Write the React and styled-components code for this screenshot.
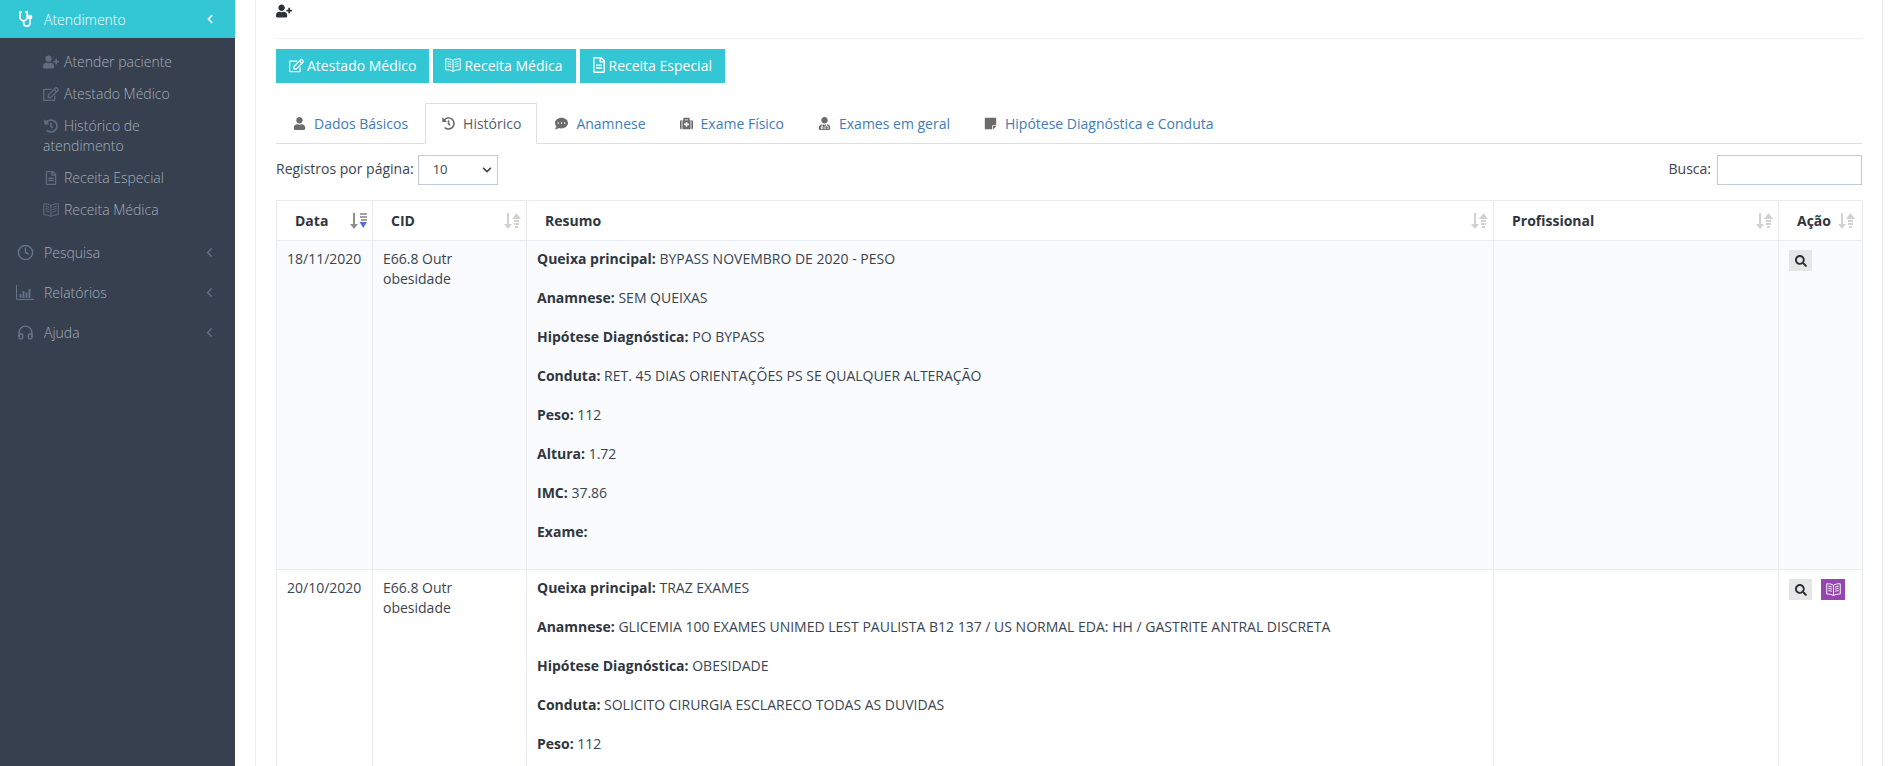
import React from 'react';
import styled, { createGlobalStyle } from 'styled-components';
import {
  FaUserPlus, FaRegEdit, FaHistory, FaRegFileAlt, FaUser, FaCommentDots,
  FaMedkit, FaUserMd, FaStickyNote, FaSearch, FaChevronDown, FaChevronLeft,
} from 'react-icons/fa';
import { FiClock, FiHeadphones, FiChevronLeft } from 'react-icons/fi';

const GlobalStyle = createGlobalStyle`
  html, body { margin: 0; padding: 0; height: 766px; overflow: hidden; background: #fff; }
  body { font-family: "Open Sans", "Liberation Sans", sans-serif; font-size: 14px; line-height: 1.5; color: #3b4450; }
  * { box-sizing: border-box; }
`;

const Page = styled.div`
  display: flex;
  height: 766px;
  overflow: hidden;
`;

const Sidebar = styled.aside`
  width: 235px;
  flex: none;
  background: #36404e;
  color: #a3aebd;
`;

const NavHead = styled.div`
  display: flex;
  align-items: center;
  gap: 10px;
  height: ${p => p.$active ? 38 : 40}px;
  padding: 0 20px 0 16px;
  background: ${p => p.$active ? '#33c6d4' : 'transparent'};
  color: ${p => p.$active ? '#fff' : '#a3aebd'};
  font-size: 14px;
  font-weight: 300;
`;

const NavIcon = styled.span`
  width: 18px;
  flex: none;
  display: flex;
  justify-content: center;
  font-size: 17px;
  color: ${p => p.$active ? '#fff' : '#66748a'};
`;

const NavLabel = styled.span`
  flex: 1;
`;

const ActiveChevron = styled(FaChevronLeft)`
  font-size: 10px;
  color: #fff;
`;

const IdleChevron = styled(FiChevronLeft)`
  font-size: 15px;
  margin-right: -2px;
  color: #66748a;
`;

const SubList = styled.ul`
  list-style: none;
  margin: 0;
  padding: 8px 0 6.5px 43px;
`;

const SubItem = styled.li`
  padding: 6px 20px 6.5px 0;
  line-height: 19.5px;
  font-size: 14px;
  font-weight: 300;
  color: #a3aebd;
  svg { color: #5f6d80; margin-right: 5px; vertical-align: -2px; width: 16px; height: 14px; }
`;

const StethoscopeIcon = () => (
  <svg width="15" height="17" viewBox="0 0 15 17" fill="none" stroke="currentColor" strokeWidth="1.7">
    <path d="M4 1.2H2v5a3.6 3.6 0 0 0 7.2 0v-5h-2" />
    <path d="M5.6 10v2a3.2 3.2 0 0 0 6.4 0V8" />
    <circle cx="12" cy="6" r="1.5" fill="currentColor" />
  </svg>
);

const ChartIcon = () => (
  <svg width="18" height="15" viewBox="0 0 18 15" fill="none" stroke="currentColor" strokeWidth="1">
    <path d="M.5 0v14.5h17.5" />
    <path d="M4.5 13V9M7.5 13V6M10.5 13V7.5M13.5 13V4" strokeWidth="1.8" />
  </svg>
);

// livro aberto com linhas, o mesmo do menu e dos botoes
const BookIcon = ({ size = 16 }) => (
  <svg width={size} height={size * 0.875} viewBox="0 0 16 14" fill="none" stroke="currentColor" strokeWidth="1">
    <path d="M8 2.500C6 1 3.500.8.8.8v11c2.700 0 5.200.3 7.200 1.700 2-1.400 4.500-1.700 7.200-1.700V.8C12.500.8 10 1 8 2.500zM8 2.500v11" />
    <path d="M2.500 3.500c1.300 0 2.500.2 3.800.8M2.500 5.800c1.300 0 2.500.2 3.800.8M2.500 8.100c1.300 0 2.500.2 3.800.8M13.500 3.500c-1.300 0-2.500.2-3.800.8M13.500 5.800c-1.300 0-2.500.2-3.800.8M13.500 8.100c-1.300 0-2.500.2-3.800.8" />
  </svg>
);

const Content = styled.main`
  flex: 1;
  min-width: 0;
  padding-left: 20px;
  padding-right: 5px;
  display: flex;
`;

const Panel = styled.div`
  flex: 1;
  min-width: 0;
  border-left: 1px solid #eceff3;
  border-right: 1px solid #e6e8ec;
  padding: 0 20px;
`;

const TopIcon = styled.div`
  height: 39px;
  padding-top: 3px;
  border-bottom: 1px solid #eff1f6;
  color: #2c323a;
  font-size: 16px;
  line-height: 16px;
`;

const ButtonRow = styled.div`
  display: flex;
  gap: 4px;
  margin-top: 10px;
`;

const ActionButton = styled.button`
  display: flex;
  align-items: center;
  gap: ${p => p.$gap || 3}px;
  height: 34px;
  padding: 0 13px 2px ${p => p.$pl || 13}px;
  border: 0;
  background: #33c6d4;
  color: #fff;
  font: 14px "Open Sans", sans-serif;
  svg { font-size: 15px; }
`;

const FileIcon = styled(FaRegFileAlt)`
  width: 12px;
  height: 16px;
`;

const Tabs = styled.ul`
  display: flex;
  list-style: none;
  margin: 20px 0 0;
  padding: 0;
  height: 41px;
  border-bottom: 1px solid #dcdfe4;
`;

const Tab = styled.li`
  display: flex;
  align-items: center;
  gap: 8px;
  height: 41px;
  padding: 0 15px 0 17px;
  font-size: 14px;
  color: ${p => p.$active ? '#56606c' : '#427cb9'};
  background: ${p => p.$active ? '#fff' : 'transparent'};
  border: 1px solid ${p => p.$active ? '#dcdfe4' : 'transparent'};
  border-bottom-color: ${p => p.$active ? '#fff' : 'transparent'};
  svg { color: #6b6b6b; font-size: 13px; }
  &:first-child { padding: 0 16px; }
  &:nth-child(2) { padding-left: 16px; }
`;

const Controls = styled.div`
  display: flex;
  align-items: center;
  justify-content: space-between;
  margin-top: 11px;
  height: 30px;
  font-size: 14px;
`;

const ControlLabel = styled.label`
  display: flex;
  align-items: center;
  gap: 4px;
`;

const LabelText = styled.span`
  padding-bottom: 3px;
`;

const SelectBox = styled.div`
  display: flex;
  align-items: center;
  justify-content: space-between;
  width: 80px;
  height: 30px;
  padding: 0 2px 0 14px;
  border: 1px solid #c2cad8;
  font-size: 13px;
  background: #fff;
  svg { font-size: 10px; margin-right: 3px; color: #444; }
`;

const SearchInput = styled.input`
  width: 145px;
  height: 30px;
  margin-left: 2px;
  border: 1px solid #c2cad8;
  background: #fff;
`;

const Table = styled.table`
  width: 1587px;
  margin-top: 15px;
  border-collapse: collapse;
  table-layout: fixed;
`;

const Th = styled.th`
  position: relative;
  height: 40px;
  width: ${p => p.$w}px;
  padding: 0 26px 0 18px;
  border: 1px solid #e8ecf0;
  text-align: left;
  font-size: 14px;
  font-weight: 700;
  color: #2f3640;
`;

const SortSlot = styled.span`
  position: absolute;
  right: ${p => p.$right || 5}px;
  top: 12px;
  display: flex;
`;

const Td = styled.td`
  vertical-align: top;
  padding: 8px 10px;
  border: 1px solid #e8ecf0;
  background: ${p => p.$odd ? '#f9fbfd' : '#fff'};
  line-height: 19.5px;
  font-size: 14px;
  color: #3b4450;
  b { font-weight: 700; color: #2f3640; }
`;

const ActionIcons = styled.div`
  display: flex;
  gap: 9px;
  margin-top: 1px;
`;

const SmallAction = styled.span`
  display: flex;
  align-items: center;
  justify-content: center;
  width: ${p => p.$purple ? 24 : 23}px;
  height: 21px;
  background: ${p => p.$purple ? '#9446ae' : '#e6e6e6'};
  color: ${p => p.$purple ? '#fff' : '#2a3038'};
  svg { font-size: 12px; }
`;

// setinha de ordenacao do cabecalho, a ativa fica em azul
const SortIcon = ({ active }) => (
  <svg width="17" height="16" viewBox="0 0 17 16">
    <path d="M3 0h2v11h3l-4 5-4-5h3z" fill={active ? '#8f8f8f' : '#d2d2d2'} />
    {active ? (
      <g>
        <path d="M10 0h7v2h-7zM10 3h7v2h-7zM11 6h6v2h-6z" fill="#a3a3a3" />
        <path d="M9.500 9h7.500l-3.750 6z" fill="#5a6fd8" />
      </g>
    ) : (
      <g fill="#d2d2d2">
        <path d="M12.500 0 17 6h-9z" />
        <path d="M10 7h5v2h-5zM10 10h5v2h-5zM11 13h3v2h-3z" />
      </g>
    )}
  </svg>
);

const Resumo = ({ items }) => (
  <>
    {items.map(([k, v]) => (
      <React.Fragment key={k}>
        <b>{k}:</b> {v}<br /><br />
      </React.Fragment>
    ))}
  </>
);

const rows = [
  {
    date: '18/11/2020',
    items: [
      ['Queixa principal', 'BYPASS NOVEMBRO DE 2020 - PESO'],
      ['Anamnese', 'SEM QUEIXAS'],
      ['Hipótese Diagnóstica', 'PO BYPASS'],
      ['Conduta', 'RET. 45 DIAS ORIENTAÇÕES PS SE QUALQUER ALTERAÇÃO'],
      ['Peso', '112'],
      ['Altura', '1.72'],
      ['IMC', '37.86'],
      ['Exame', ''],
    ],
  },
  {
    date: '20/10/2020',
    book: true,
    items: [
      ['Queixa principal', 'TRAZ EXAMES'],
      ['Anamnese', 'GLICEMIA 100 EXAMES UNIMED LEST PAULISTA B12 137 / US NORMAL EDA: HH / GASTRITE ANTRAL DISCRETA'],
      ['Hipótese Diagnóstica', 'OBESIDADE'],
      ['Conduta', 'SOLICITO CIRURGIA ESCLARECO TODAS AS DUVIDAS'],
      ['Peso', '112'],
    ],
  },
];

const tabs = [
  [FaUser, 'Dados Básicos'],
  [FaHistory, 'Histórico', true],
  [FaCommentDots, 'Anamnese'],
  [FaMedkit, 'Exame Físico'],
  [FaUserMd, 'Exames em geral'],
  [FaStickyNote, 'Hipótese Diagnóstica e Conduta'],
];

export default function App() {
  return (
    <Page>
      <GlobalStyle />
      <Sidebar>
        <NavHead $active>
          <NavIcon $active><StethoscopeIcon /></NavIcon>
          <NavLabel>Atendimento</NavLabel>
          <ActiveChevron />
        </NavHead>
        <SubList>
          <SubItem><FaUserPlus />Atender paciente</SubItem>
          <SubItem><FaRegEdit />Atestado Médico</SubItem>
          <SubItem><FaHistory />Histórico de atendimento</SubItem>
          <SubItem><FaRegFileAlt />Receita Especial</SubItem>
          <SubItem><BookIcon />Receita Médica</SubItem>
        </SubList>
        <NavHead>
          <NavIcon><FiClock /></NavIcon>
          <NavLabel>Pesquisa</NavLabel>
          <IdleChevron />
        </NavHead>
        <NavHead>
          <NavIcon><ChartIcon /></NavIcon>
          <NavLabel>Relatórios</NavLabel>
          <IdleChevron />
        </NavHead>
        <NavHead>
          <NavIcon><FiHeadphones /></NavIcon>
          <NavLabel>Ajuda</NavLabel>
          <IdleChevron />
        </NavHead>
      </Sidebar>
      <Content>
        <Panel>
          <TopIcon><FaUserPlus /></TopIcon>
          <ButtonRow>
            <ActionButton><FaRegEdit />Atestado Médico</ActionButton>
            <ActionButton $pl={12}><BookIcon />Receita Médica</ActionButton>
            <ActionButton $gap={4}><FileIcon />Receita Especial</ActionButton>
          </ButtonRow>
          <Tabs>
            {tabs.map(([Icon, label, active]) => (
              <Tab key={label} $active={active}><Icon />{label}</Tab>
            ))}
          </Tabs>
          <Controls>
            <ControlLabel>
              <LabelText>Registros por página:</LabelText>
              <SelectBox>10<FaChevronDown /></SelectBox>
            </ControlLabel>
            <ControlLabel>
              <LabelText>Busca:</LabelText>
              <SearchInput />
            </ControlLabel>
          </Controls>
          <Table>
            <thead>
              <tr>
                <Th $w={96}>Data<SortSlot><SortIcon active /></SortSlot></Th>
                <Th $w={154}>CID<SortSlot><SortIcon /></SortSlot></Th>
                <Th>Resumo<SortSlot><SortIcon /></SortSlot></Th>
                <Th $w={285}>Profissional<SortSlot><SortIcon /></SortSlot></Th>
                <Th $w={84}>Ação<SortSlot $right={7}><SortIcon /></SortSlot></Th>
              </tr>
            </thead>
            <tbody>
              {rows.map((r, i) => (
                <tr key={r.date}>
                  <Td $odd={i % 2 === 0}>{r.date}</Td>
                  <Td $odd={i % 2 === 0}>E66.8 Outr obesidade</Td>
                  <Td $odd={i % 2 === 0}><Resumo items={r.items} /></Td>
                  <Td $odd={i % 2 === 0} />
                  <Td $odd={i % 2 === 0}>
                    <ActionIcons>
                      <SmallAction><FaSearch /></SmallAction>
                      {r.book && <SmallAction $purple><BookIcon size={15} /></SmallAction>}
                    </ActionIcons>
                  </Td>
                </tr>
              ))}
            </tbody>
          </Table>
        </Panel>
      </Content>
    </Page>
  );
}
